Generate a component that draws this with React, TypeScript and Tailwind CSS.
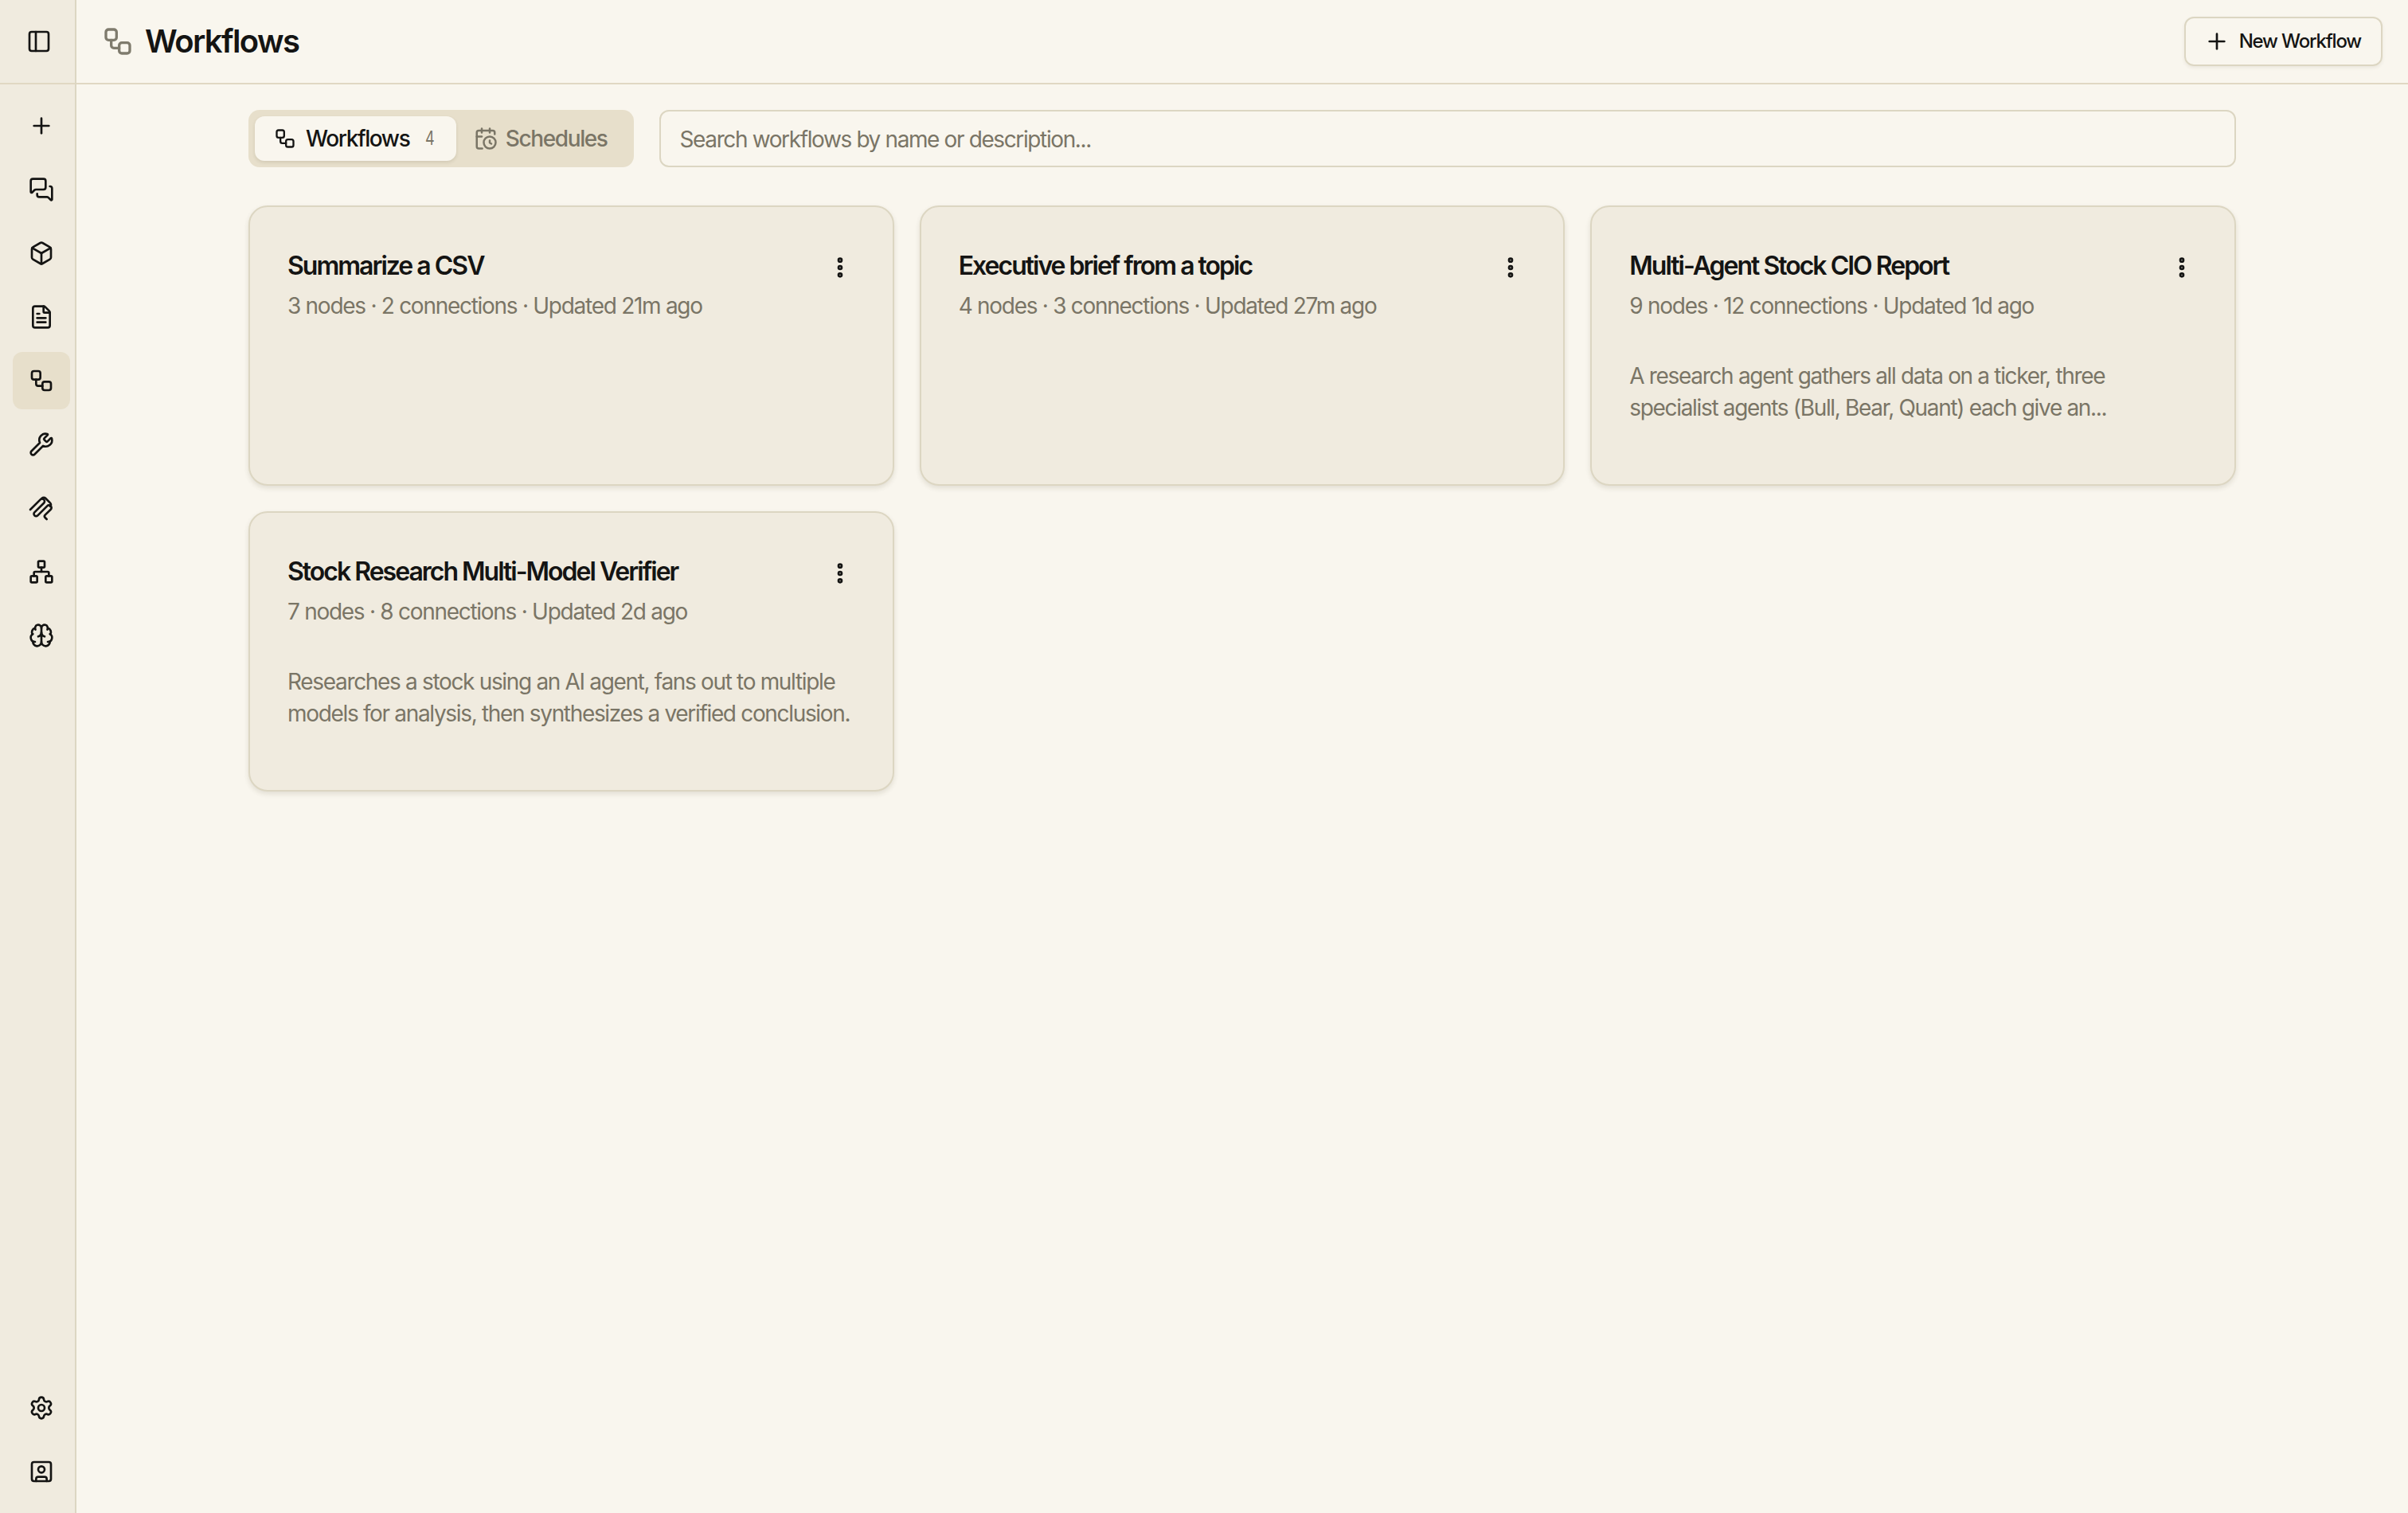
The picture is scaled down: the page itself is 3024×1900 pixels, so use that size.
import { PanelLeft, Plus, MessagesSquare, Box, FileText, Workflow, Wrench, Network, Brain, Settings, SquareUser, CalendarClock, EllipsisVertical } from "lucide-react";

function StackedClip({ className }: { className?: string }) {
  return (
    <svg viewBox="0 0 24 24" fill="none" stroke="currentColor" strokeWidth={2} strokeLinecap="round" strokeLinejoin="round" className={className}>
      <path d="M1.5 13.5 11 4a2.3 2.3 0 0 1 3.3 3.3L5.5 16a2.1 2.1 0 0 0 3 3L17.5 10a2.3 2.3 0 0 1 3.3 3.3L15.5 18.5a1.8 1.8 0 0 0 0 2.5l1.5 1.5" />
      <path d="M12.5 2.8a2.4 2.4 0 0 1 3.4 0l4.4 4.4a2.4 2.4 0 0 1 0 3.4" />
    </svg>
  );
}

const navTop = [
  { I: Plus, active: false },
  { I: MessagesSquare, active: false },
  { I: Box, active: false },
  { I: FileText, active: false },
  { I: Workflow, active: true },
  { I: Wrench, active: false },
  { I: StackedClip, active: false },
  { I: Network, active: false },
  { I: Brain, active: false },
];

const cards = [
  { title: "Summarize a CSV", meta: "3 nodes · 2 connections · Updated 21m ago", desc: "" },
  { title: "Executive brief from a topic", meta: "4 nodes · 3 connections · Updated 27m ago", desc: "" },
  { title: "Multi-Agent Stock CIO Report", meta: "9 nodes · 12 connections · Updated 1d ago", desc: "A research agent gathers all data on a ticker, three specialist agents (Bull, Bear, Quant) each give an..." },
  { title: "Stock Research Multi-Model Verifier", meta: "7 nodes · 8 connections · Updated 2d ago", desc: "Researches a stock using an AI agent, fans out to multiple models for analysis, then synthesizes a verified conclusion." },
];

export default function App() {
  return (
    <div className="flex h-[1900px] w-[3024px] overflow-hidden bg-[#f9f6ee] text-[#141413] font-['Inter',sans-serif]">
      <aside className="flex w-[96px] shrink-0 flex-col border-r-2 border-[#dcd6c2] bg-[#f0ebdf]">
        <div className="flex h-[106px] shrink-0 items-center justify-center border-b-2 border-[#e0d8c3] pl-[3px]">
          <PanelLeft className="size-[32px]" strokeWidth={2} />
        </div>
        <nav className="flex flex-col gap-[8px] pt-[16px] pl-[16px]">
          {navTop.map(({ I, active }, i) => (
            <div key={i} className={`flex size-[72px] items-center justify-center rounded-[12px] ${active ? "bg-[#e7dfcb]" : ""}`}>
              <I className="size-[32px]" strokeWidth={2} />
            </div>
          ))}
        </nav>
        <div className="mt-auto flex flex-col gap-[8px] pb-[16px] pl-[16px]">
          <div className="flex size-[72px] items-center justify-center"><Settings className="size-[32px]" strokeWidth={2} /></div>
          <div className="flex size-[72px] items-center justify-center"><SquareUser className="size-[32px]" strokeWidth={2} /></div>
        </div>
      </aside>
      <div className="flex min-w-0 flex-1 flex-col">
        <header className="flex h-[106px] shrink-0 items-center justify-between border-b-2 border-[#e0d8c3] pl-[32px] pr-[32px]">
          <div className="flex items-center gap-[14px]">
            <Workflow className="size-[40px] text-[#7f7b6d]" strokeWidth={2} />
            <h1 className="text-[40px] leading-[56px] font-semibold tracking-[-1.6px]">Workflows</h1>
          </div>
          <button className="flex h-[62px] items-center gap-[12px] rounded-[12px] border-2 border-[#dcd6c2] pl-[23px] pr-[25px] text-[24px] font-medium tracking-[-1.2px] shadow-[0_2px_4px_rgba(60,50,20,0.08)]">
            <Plus className="size-[32px]" strokeWidth={2} />
            New Workflow
          </button>
        </header>
        <main className="flex-1 px-[216px] pt-[32px]">
          <div className="flex items-center gap-[32px]">
            <div className="flex h-[72px] shrink-0 items-center rounded-[14px] bg-[#e7dfcb] p-[8px]">
              <div className="flex h-[56px] items-center gap-[12px] rounded-[12px] bg-[#f9f6ee] pl-[24px] pr-[25px] shadow-[0_2px_4px_rgba(60,50,20,0.12)]">
                <Workflow className="size-[28px]" strokeWidth={2} />
                <span className="text-[28px] font-medium leading-[40px] tracking-[-1.4px]">Workflows</span>
                <span className="ml-[6px] scale-x-75 text-[24px] text-[#7a7566]">4</span>
              </div>
              <div className="flex h-[56px] items-center gap-[10px] pl-[22px] pr-[25px] text-[#7a7566]">
                <CalendarClock className="size-[30px]" strokeWidth={2} />
                <span className="text-[28px] font-medium leading-[40px] tracking-[-1.4px]">Schedules</span>
              </div>
            </div>
            <div className="flex h-[72px] flex-1 items-center rounded-[12px] border-2 border-[#dcd6c2] px-[24px] pt-[2px] text-[28px] tracking-[-1.38px] text-[#7a7566]">
              Search workflows by name or description...
            </div>
          </div>
          <div className="mt-[48px] grid grid-cols-3 gap-[32px]">
            {cards.map((c) => (
              <div key={c.title} className="h-[352px] rounded-[24px] border-2 border-[#dcd6c2] bg-[#f0ebdf] px-[47px] pt-[52px] shadow-[0_3px_6px_rgba(60,50,20,0.12)]">
                <div className="flex items-start justify-between">
                  <div className="min-w-0">
                    <h3 className="text-[32px] leading-[44px] font-semibold tracking-[-2px]">{c.title}</h3>
                    <p className="mt-[8px] text-[28px] leading-[40px] text-[#7a7566] tracking-[-1.28px]">{c.meta}</p>
                  </div>
                  <EllipsisVertical className="mt-[8px] mr-[3px] size-[32px] shrink-0" strokeWidth={3} />
                </div>
                {c.desc && <p className="mt-[48px] text-[28px] leading-[40px] text-[#7a7566] tracking-[-1.33px]">{c.desc}</p>}
              </div>
            ))}
          </div>
        </main>
      </div>
    </div>
  );
}
